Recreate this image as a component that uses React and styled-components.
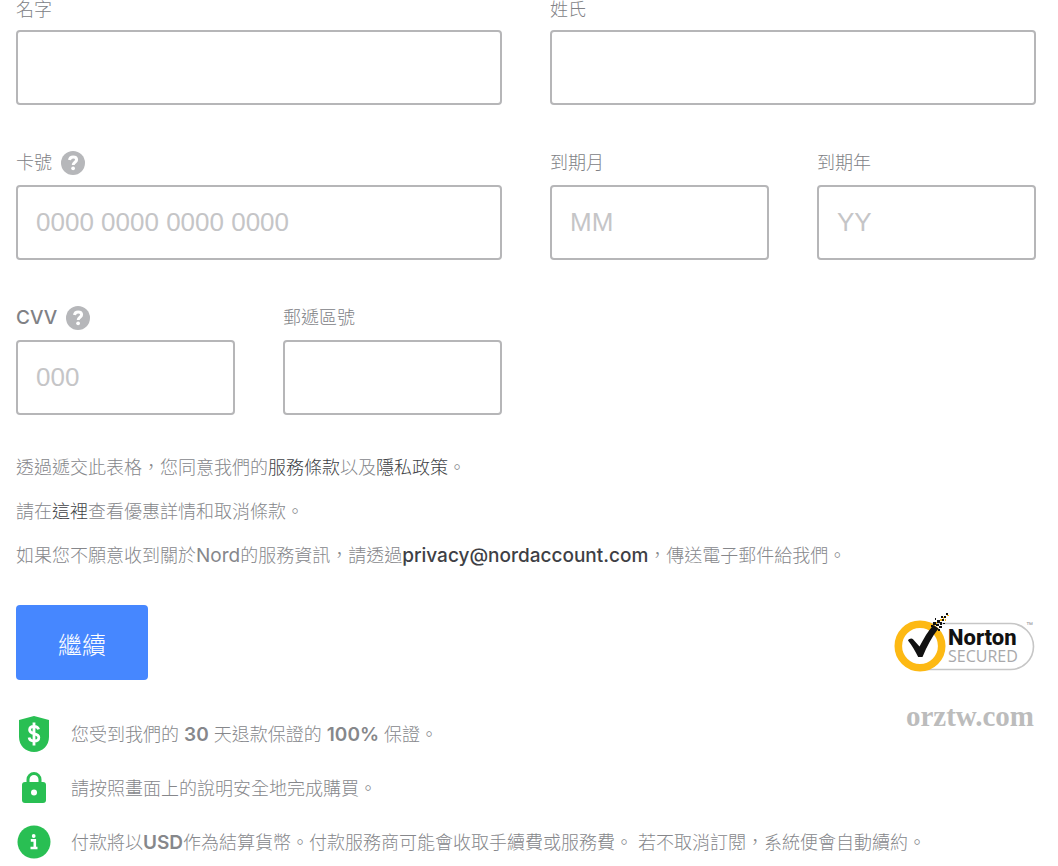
import React from 'react';
import styled, { createGlobalStyle } from 'styled-components';

const GlobalStyle = createGlobalStyle`
  body {
    margin: 0;
    background: #fff;
    color: #86878b;
    font-family: Inter, 'Noto Sans CJK TC', sans-serif;
    font-size: 18px;
    font-weight: 300;
    line-height: 20px;
  }

  *, *::before, *::after {
    box-sizing: border-box;
  }
`;

const Checkout = styled.form`
  padding: 0 22px 0 16px;
`;

const FieldGrid = styled.div`
  display: grid;
  grid-template-columns: repeat(4, 1fr);
  gap: 46px 48px;
`;

const Field = styled.div`
  grid-column: span ${(props) => props.$span || 1};
  display: flex;
  flex-direction: column;
  justify-content: flex-end;
  gap: 10px;
`;

const LabelRow = styled.div`
  display: flex;
  align-items: center;
  gap: 9px;
  min-height: ${(props) => (props.$tall ? 24 : 20)}px;
`;

const Label = styled.label`
  color: #808185;
`;

const HelpButton = styled.button`
  display: flex;
  padding: 0;
  border: none;
  background: none;
  cursor: pointer;
`;

const Input = styled.input`
  width: 100%;
  height: 75px;
  padding: 0 18px;
  border: 2px solid #b6b6b8;
  border-radius: 4px;
  background: #fff;
  color: #3e3f45;
  font-family: 'Liberation Sans', Arial, sans-serif;
  font-size: 26px;

  &::placeholder {
    color: #c5c5c7;
    opacity: 1;
  }

  &:focus {
    outline: none;
    border-color: #4687ff;
  }
`;

const Latin = styled.span`
  font-size: 19px;
  font-weight: ${(props) => props.$weight || 400};
`;

const Terms = styled.div`
  display: flex;
  flex-direction: column;
  gap: 24px;
  margin-top: 43px;
`;

const Paragraph = styled.p`
  margin: 0;
`;

const TermsLink = styled.a`
  color: #3e3f45;
  text-decoration: none;

  &:hover {
    text-decoration: underline;
  }
`;

const Actions = styled.div`
  display: flex;
  align-items: center;
  justify-content: space-between;
  margin-top: 39px;
`;

const SubmitButton = styled.button`
  height: 75px;
  padding: 2px 42px 0;
  border: none;
  border-radius: 4px;
  background: #4687ff;
  color: #fff;
  font-family: inherit;
  font-size: 24px;
  font-weight: 300;
  cursor: pointer;
`;

const Footer = styled.div`
  position: relative;
  margin-top: 36px;
`;

const Guarantees = styled.ul`
  display: flex;
  flex-direction: column;
  gap: 18px;
  margin: 0;
  padding: 0;
  list-style: none;
`;

const Guarantee = styled.li`
  display: flex;
  align-items: center;
  gap: 19px;
  min-height: 36px;

  svg {
    flex: none;
  }
`;

const GuaranteeText = styled.span`
  padding-top: 2px;
`;

const Watermark = styled.div`
  position: absolute;
  top: -12px;
  right: 2px;
  color: #bcbcbc;
  font-family: 'Liberation Serif', 'Times New Roman', serif;
  font-size: 29px;
  font-weight: 700;
  line-height: 24px;
`;

function HelpIcon() {
  return (
    <svg width="24" height="24" viewBox="0 0 24 24" fill="none" aria-hidden="true">
      <circle cx="12" cy="12" r="12" fill="#b6b7ba" />
      <path d="M8.500 9c.3-2 1.700-3.100 3.600-3.100 2 0 3.500 1.100 3.500 2.900 0 2.500-3.400 2.400-3.400 5.200" stroke="#fff" strokeWidth="3" />
      <circle cx="12.100" cy="17.300" r="1.900" fill="#fff" />
    </svg>
  );
}

function ShieldIcon() {
  return (
    <svg width="36" height="36" viewBox="0 0 36 36" fill="none" aria-hidden="true">
      <path d="M18 0l15 4v17c0 8.500-6.500 15-15 15S3 29.500 3 21V4z" fill="#29bf53" />
      <path d="M22.600 13.400c-.6-2-2.300-3-4.600-3-2.600 0-4.400 1.300-4.400 3.500 0 4.900 9.200 2.500 9.200 7.600 0 2.300-2 3.600-4.700 3.600-2.600 0-4.600-1.200-5-3.500M18 6.500v23" stroke="#fff" strokeWidth="2.800" />
    </svg>
  );
}

function LockIcon() {
  return (
    <svg width="36" height="36" viewBox="0 0 36 36" fill="none" aria-hidden="true">
      <path d="M12 13V9.500a6 6 0 0 1 12 0V13" stroke="#29bf53" strokeWidth="3" />
      <rect x="6" y="12" width="24" height="21" rx="3" fill="#29bf53" />
      <circle cx="18" cy="22.500" r="3" fill="#fff" />
    </svg>
  );
}

function InfoIcon() {
  return (
    <svg width="36" height="36" viewBox="0 0 36 36" fill="none" aria-hidden="true">
      <circle cx="18" cy="18" r="16.500" fill="#29bf53" />
      <circle cx="17.700" cy="12" r="1.900" fill="#fff" />
      <path d="M14.800 16.400h4v7.300M14.500 24h7" stroke="#fff" strokeWidth="2.600" />
    </svg>
  );
}

function NortonBadge() {
  return (
    <svg width="143" height="62" viewBox="0 0 143 62" role="img" aria-label="Norton Secured">
      <path d="M30 11.500h87.500a23 23 0 0 1 0 46H30" fill="#fff" stroke="#c6c6c6" strokeWidth="1.600" />
      <circle cx="27" cy="34" r="21.700" fill="#fff" stroke="#fdb913" strokeWidth="7.600" />
      <path d="M15 28.500c1-1.800 3.600-2.600 5-1.200l6.500 7.200C31 26 35 19 40.500 13l5 3.500C39 24.500 34 34 29.500 45h-4.300C22 38.500 19 33.500 15 28.500z" fill="#111" />
      <path d="M40 10h3v3h-3zM43 12h3v2h-3zM44 8h3v3h-3zM47 10h2v3h-2zM46 14h3v2h-3zM49 7h2v2h-2zM48 4h2v2h-2zM51 4h2v2h-2zM53 1h2v2h-2zM50 11h2v1h-2zM38 13h2v2h-2zM42 6h1v2h-1zM45 17h2v2h-2z" fill="#111" />
      <path d="M47 7h2v2h-2zM50 5h1v2h-1zM54 3h2v1h-2zM43 10h1v2h-1zM52 7h1v2h-1z" fill="#fdb913" />
      <text x="55" y="33" fill="#111" fontFamily="Roboto, sans-serif" fontSize="22" fontWeight="800">Norton</text>
      <text x="55" y="50" fill="#a9a9ab" fontFamily="Open Sans, sans-serif" fontSize="16" fontWeight="500">SECURED</text>
      <text x="133" y="15" fill="#8b8c90" fontFamily="Liberation Sans, sans-serif" fontSize="7">™</text>
    </svg>
  );
}

export default function App() {
  return (
    <>
      <GlobalStyle />
      <Checkout onSubmit={(e) => e.preventDefault()}>
        <FieldGrid>
          <Field $span={2}>
            <LabelRow>
              <Label htmlFor="firstName">名字</Label>
            </LabelRow>
            <Input id="firstName" type="text" autoComplete="given-name" />
          </Field>
          <Field $span={2}>
            <LabelRow>
              <Label htmlFor="lastName">姓氏</Label>
            </LabelRow>
            <Input id="lastName" type="text" autoComplete="family-name" />
          </Field>

          <Field $span={2}>
            <LabelRow $tall>
              <Label htmlFor="cardNumber">卡號</Label>
              <HelpButton type="button" aria-label="卡號">
                <HelpIcon />
              </HelpButton>
            </LabelRow>
            <Input id="cardNumber" type="text" inputMode="numeric" placeholder="0000 0000 0000 0000" />
          </Field>
          <Field>
            <LabelRow $tall>
              <Label htmlFor="expMonth">到期月</Label>
            </LabelRow>
            <Input id="expMonth" type="text" inputMode="numeric" placeholder="MM" />
          </Field>
          <Field>
            <LabelRow $tall>
              <Label htmlFor="expYear">到期年</Label>
            </LabelRow>
            <Input id="expYear" type="text" inputMode="numeric" placeholder="YY" />
          </Field>

          <Field>
            <LabelRow $tall>
              <Label htmlFor="cvv">
                <Latin $weight={500}>CVV</Latin>
              </Label>
              <HelpButton type="button" aria-label="CVV">
                <HelpIcon />
              </HelpButton>
            </LabelRow>
            <Input id="cvv" type="text" inputMode="numeric" placeholder="000" />
          </Field>
          <Field>
            <LabelRow $tall>
              <Label htmlFor="zip">郵遞區號</Label>
            </LabelRow>
            <Input id="zip" type="text" autoComplete="postal-code" />
          </Field>
        </FieldGrid>

        <Terms>
          <Paragraph>
            透過遞交此表格，您同意我們的<TermsLink href="#terms">服務條款</TermsLink>以及
            <TermsLink href="#privacy">隱私政策</TermsLink>。
          </Paragraph>
          <Paragraph>
            請在<TermsLink href="#offer">這裡</TermsLink>查看優惠詳情和取消條款。
          </Paragraph>
          <Paragraph>
            如果您不願意收到關於<Latin>Nord</Latin>的服務資訊，請透過
            <TermsLink href="mailto:privacy@nordaccount.com">
              <Latin $weight={500}>privacy@nordaccount.com</Latin>
            </TermsLink>
            ，傳送電子郵件給我們。
          </Paragraph>
        </Terms>

        <Actions>
          <SubmitButton type="submit">繼續</SubmitButton>
          <NortonBadge />
        </Actions>

        <Footer>
          <Guarantees>
            <Guarantee>
              <ShieldIcon />
              <GuaranteeText>
                您受到我們的 <Latin $weight={600}>30</Latin> 天退款保證的 <Latin $weight={600}>100%</Latin> 保證。
              </GuaranteeText>
            </Guarantee>
            <Guarantee>
              <LockIcon />
              <GuaranteeText>請按照畫面上的說明安全地完成購買。</GuaranteeText>
            </Guarantee>
            <Guarantee>
              <InfoIcon />
              <GuaranteeText>
                付款將以<Latin $weight={600}>USD</Latin>作為結算貨幣。付款服務商可能會收取手續費或服務費。 若不取消訂閱，系統便會自動續約。
              </GuaranteeText>
            </Guarantee>
          </Guarantees>
          <Watermark>orztw.com</Watermark>
        </Footer>
      </Checkout>
    </>
  );
}
